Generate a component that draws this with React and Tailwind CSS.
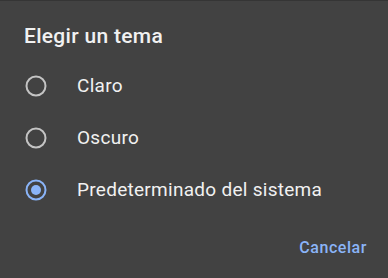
const options = [
  { label: 'Claro', checked: false },
  { label: 'Oscuro', checked: false },
  { label: 'Predeterminado del sistema', checked: true },
];

function Radio({ checked }) {
  return (
    <svg width="22" height="22" viewBox="0 0 22 22" className="flex-shrink-0">
      <circle
        cx="11"
        cy="11"
        r="9.5"
        fill="none"
        stroke={checked ? '#8ab4f8' : '#c4c4c4'}
        strokeWidth="2"
      />
      {checked && <circle cx="11" cy="11" r="5" fill="#8ab4f8" />}
    </svg>
  );
}

export default function App() {
  return (
    <div
      className="w-[388px] h-[278px] bg-[#424242] border-t border-[#353535] flex flex-col overflow-hidden"
      style={{ fontFamily: 'Roboto, "Liberation Sans", sans-serif' }}
    >
      {/* Title */}
      <h2 className="pt-[23px] pl-[24px] text-[21px] leading-[24px] tracking-[0.3px] font-medium text-[#f1f1f1]">
        Elegir un tema
      </h2>

      {/* Options */}
      <div className="mt-[12px] flex flex-col">
        {options.map(({ label, checked }) => (
          <div key={label} className="h-[52px] flex items-center pl-[25px]">
            <Radio checked={checked} />
            <span className="ml-[30px] text-[19px] leading-[24px] tracking-[0.28px] text-[#f1f1f1]">
              {label}
            </span>
          </div>
        ))}
      </div>

      {/* Actions */}
      <div className="mt-[22px] flex justify-end pr-[21px]">
        <button className="text-[16px] leading-[20px] font-medium text-[#8ab4f8] tracking-[0.55px]">
          Cancelar
        </button>
      </div>
    </div>
  );
}
